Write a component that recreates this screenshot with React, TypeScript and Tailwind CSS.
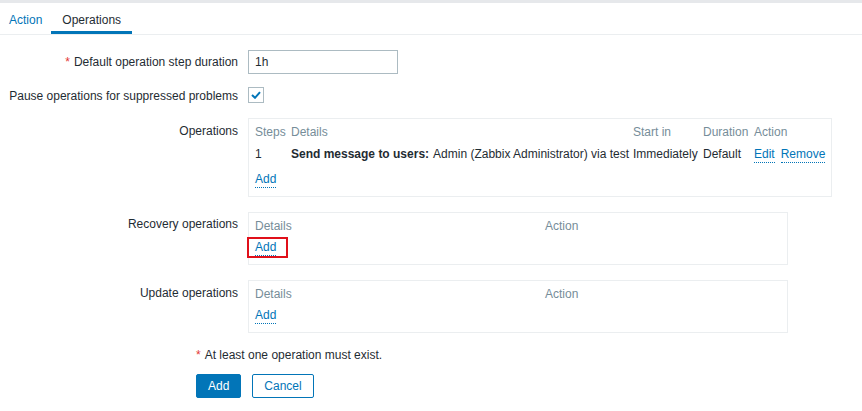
import React from "react";

const Link = ({ children }: { children: React.ReactNode }) => (
  <span className="text-[#0275b8] border-b border-dotted border-[#0275b8] cursor-pointer">{children}</span>
);

export default function App() {
  return (
    <div className="w-[862px] h-[411px] bg-white text-[#1f2c33] text-[12px] leading-[16px] font-['Liberation_Sans',Arial,sans-serif] overflow-hidden">
      <div className="h-[3px] bg-[#e6e8eb]" />
      <div className="h-[32px] flex border-b border-[#ebeef0]">
        <div className="px-[9px] flex items-center pt-[2px] text-[#0275b8]">Action</div>
        <div className="px-[11px] flex items-center border-b-[3px] border-[#0275b8] pt-[5px]">Operations</div>
      </div>

      {/* row 1 */}
      <div className="flex mt-[15px]">
        <div className="w-[238px] h-[24px] flex items-center justify-end">
          <span className="text-[#e33734] mr-[4px]">*</span>Default operation step duration
        </div>
        <div className="ml-[10px] w-[150px] h-[24px] border border-[#acbbc2] flex items-center px-[6px]">1h</div>
      </div>

      {/* row 2 */}
      <div className="flex mt-[9px]">
        <div className="w-[238px] h-[24px] flex items-center justify-end pt-[1px]">Pause operations for suppressed problems</div>
        <div className="ml-[10px] h-[24px] flex items-center">
          <div className="w-[16px] h-[16px] border border-[#acbbc2] flex items-center justify-center">
            <svg width="10" height="8" viewBox="0 0 10 8">
              <path d="M1 4 L4 6.8 L9 1.2" fill="none" stroke="#0275b8" strokeWidth="2" />
            </svg>
          </div>
        </div>
      </div>

      {/* Operations */}
      <div className="flex mt-[11px]">
        <div className="w-[238px] text-right pt-[5px]">Operations</div>
        <div className="ml-[10px] w-[584px] border border-[#ebeef0] pt-[2px] px-[6px] pb-[7px]">
          <div className="grid grid-cols-[36px_342px_70px_51px_auto]">
            <div className="h-[22px] flex items-center text-[#768d99]">Steps</div>
            <div className="h-[22px] flex items-center text-[#768d99]">Details</div>
            <div className="h-[22px] flex items-center text-[#768d99]">Start in</div>
            <div className="h-[22px] flex items-center text-[#768d99]">Duration</div>
            <div className="h-[22px] flex items-center text-[#768d99]">Action</div>
            <div className="h-[22px] flex items-center">1</div>
            <div className="h-[22px] flex items-center whitespace-nowrap">
              <b className="font-bold mr-[4px]">Send message to users:</b>Admin (Zabbix Administrator) via test
            </div>
            <div className="h-[22px] flex items-center">Immediately</div>
            <div className="h-[22px] flex items-center">Default</div>
            <div className="h-[22px] flex items-center gap-[6px]">
              <Link>Edit</Link>
              <Link>Remove</Link>
            </div>
          </div>
          <div className="h-[20px] mt-[4px] flex items-center">
            <Link>Add</Link>
          </div>
        </div>
      </div>

      {/* Recovery */}
      <div className="flex mt-[15px]">
        <div className="w-[238px] text-right pt-[4px]">Recovery operations</div>
        <div className="ml-[10px] w-[540px] border border-[#ebeef0] pt-[2px] px-[6px] pb-[7px]">
          <div className="grid grid-cols-[290px_auto]">
            <div className="h-[22px] flex items-center text-[#768d99]">Details</div>
            <div className="h-[22px] flex items-center text-[#768d99]">Action</div>
          </div>
          <div className="h-[20px] flex items-center relative">
            <Link>Add</Link>
            <span className="absolute left-[-8px] top-[0px] w-[41px] h-[21px] border-2 border-[#e0101a]" />
          </div>
        </div>
      </div>

      {/* Update */}
      <div className="flex mt-[15px]">
        <div className="w-[238px] text-right pt-[5px]">Update operations</div>
        <div className="ml-[10px] w-[540px] border border-[#ebeef0] pt-[2px] px-[6px] pb-[7px]">
          <div className="grid grid-cols-[290px_auto]">
            <div className="h-[22px] flex items-center text-[#768d99]">Details</div>
            <div className="h-[22px] flex items-center text-[#768d99]">Action</div>
          </div>
          <div className="h-[20px] flex items-center">
            <Link>Add</Link>
          </div>
        </div>
      </div>

      <div className="ml-[196px] mt-[14px] h-[16px] flex items-center">
        <span className="text-[#e33734] mr-[4px]">*</span>At least one operation must exist.
      </div>

      <div className="ml-[196px] mt-[11px] flex gap-[11px]">
        <button className="h-[24px] px-[11px] bg-[#0275b8] text-white rounded-[2px] border border-[#0275b8] text-[12px]">Add</button>
        <button className="h-[24px] px-[11px] bg-white text-[#0275b8] rounded-[2px] border border-[#0275b8] text-[12px]">Cancel</button>
      </div>
    </div>
  );
}
